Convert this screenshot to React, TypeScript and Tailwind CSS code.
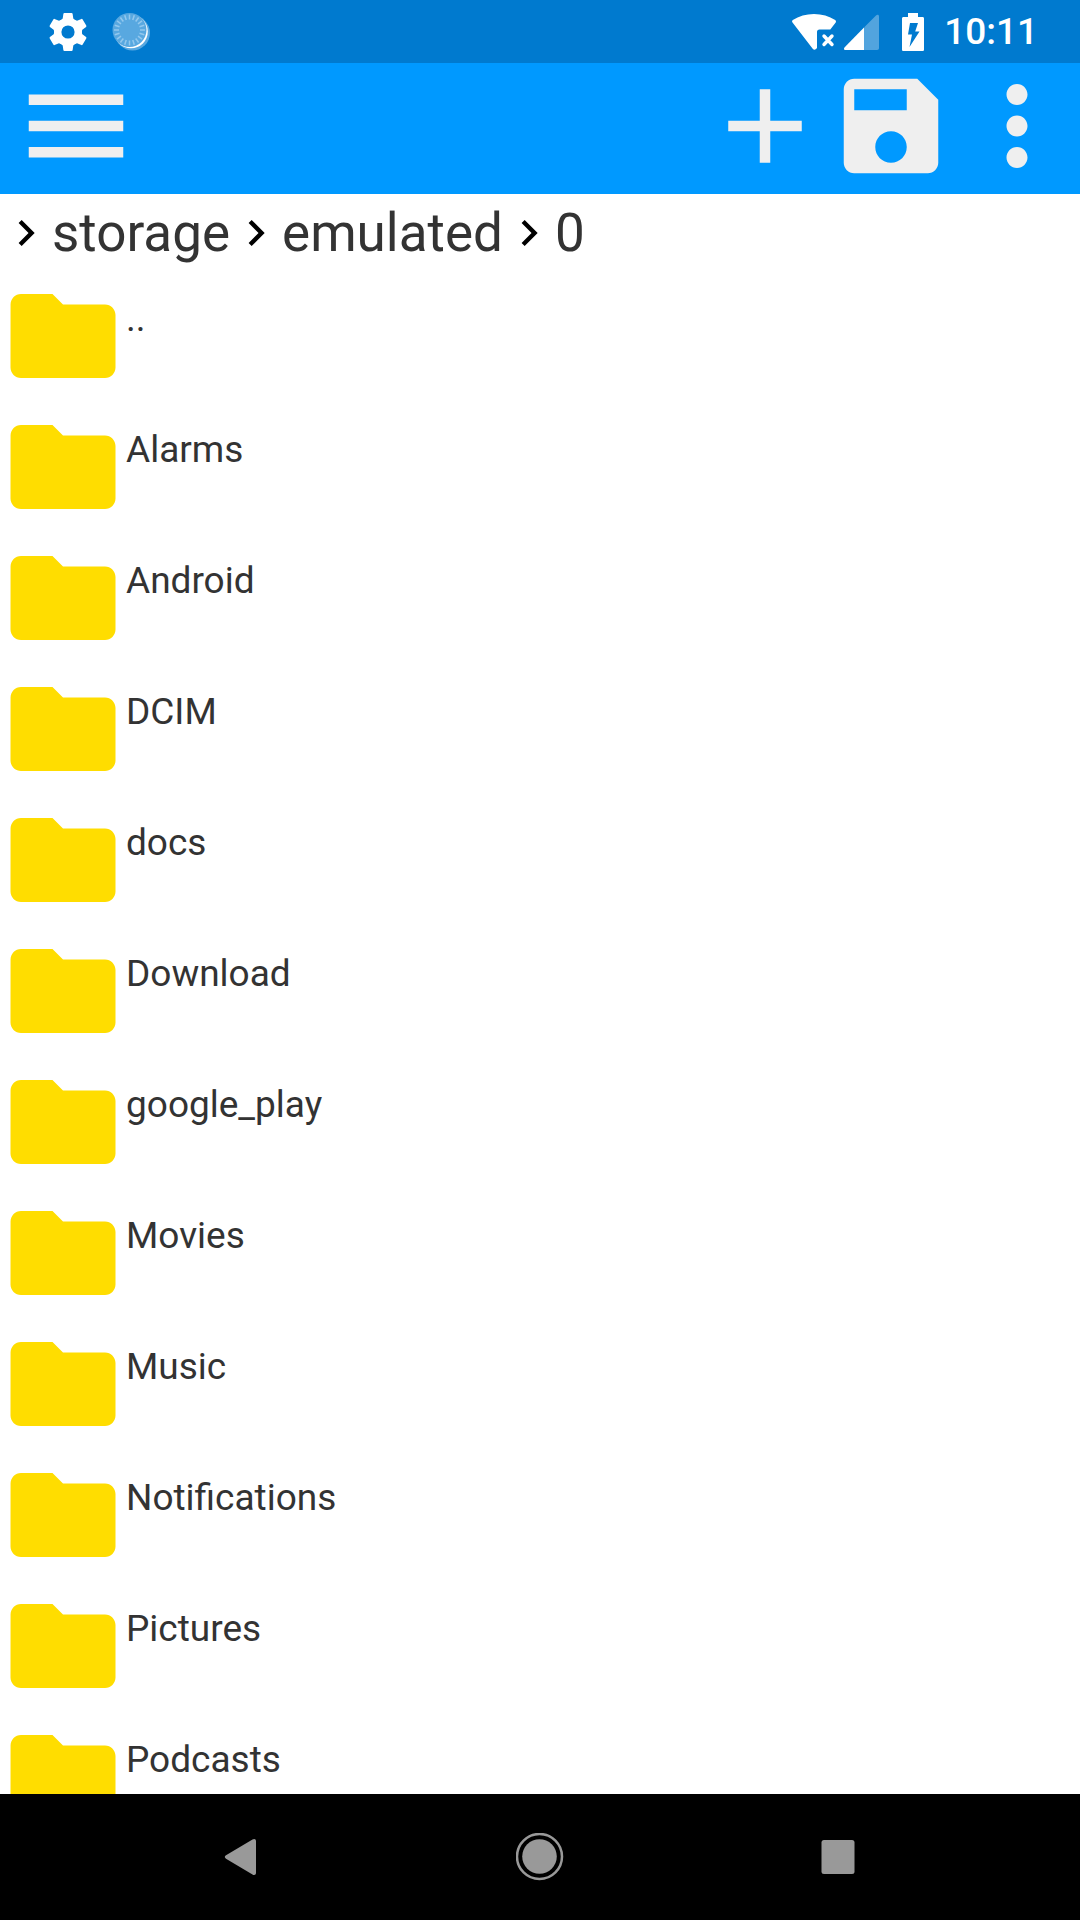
import { Fragment } from 'react';

const PATH = ['storage', 'emulated', '0'];

const FOLDERS = [
  '..',
  'Alarms',
  'Android',
  'DCIM',
  'docs',
  'Download',
  'google_play',
  'Movies',
  'Music',
  'Notifications',
  'Pictures',
  'Podcasts',
];

// 24x24 glyphs
const ICONS = {
  menu: 'M3 18h18v-2H3v2zm0-5h18v-2H3v2zm0-7v2h18V6H3z',
  add: 'M19 13h-6v6h-2v-6H5v-2h6V5h2v6h6v2z',
  save: 'M17 3H5c-1.11 0-2 .9-2 2v14c0 1.1.89 2 2 2h14c1.1 0 2-.9 2-2V7l-4-4zm-5 16c-1.66 0-3-1.34-3-3s1.34-3 3-3 3 1.34 3 3-1.34 3-3 3zm3-10H5V5h10v4z',
  more: 'M12 8c1.1 0 2-.9 2-2s-.9-2-2-2-2 .9-2 2 .9 2 2 2zm0 2c-1.1 0-2 .9-2 2s.9 2 2 2 2-.9 2-2-.9-2-2-2zm0 6c-1.1 0-2 .9-2 2s.9 2 2 2 2-.9 2-2-.9-2-2-2z',
  chevron: 'M10 6L8.59 7.41 13.17 12l-4.58 4.59L10 18l6-6z',
  folder: 'M10 4H4c-1.1 0-1.99.9-1.99 2L2 18c0 1.1.9 2 2 2h16c1.1 0 2-.9 2-2V8c0-1.1-.9-2-2-2h-8l-2-2z',
};

function Icon({ name, className }: { name: keyof typeof ICONS; className: string }) {
  return (
    <svg viewBox="0 0 24 24" fill="currentColor" className={`shrink-0 ${className}`} aria-hidden="true">
      <path d={ICONS[name]} />
    </svg>
  );
}

function SettingsIcon() {
  return (
    <svg viewBox="-23 -23 46 46" className="size-[46px]" fill="currentColor" aria-hidden="true">
      <circle r="10.300" fill="none" stroke="currentColor" strokeWidth="7.400" />
      {[0, 60, 120, 180, 240, 300].map((angle) => (
        <path
          key={angle}
          d="M-7 -11.500L-5.300 -13.500L-4.600 -18.200Q-4.400 -19 -3.600 -19H3.600Q4.400 -19 4.600 -18.200L5.300 -13.500L7 -11.500z"
          transform={`rotate(${angle})`}
        />
      ))}
    </svg>
  );
}

function SyncIcon() {
  return (
    <svg viewBox="0 0 40 40" className="size-10" aria-hidden="true">
      <circle cx="21.500" cy="21" r="17.500" fill="#58a8e0" />
      <circle cx="20" cy="19.500" r="16.800" fill="#fff" />
      <circle cx="18.500" cy="18" r="17" fill="#58a8e0" />
      {Array.from({ length: 20 }, (_, i) => (
        <path
          key={i}
          d="M18.500 2.500v5"
          stroke="#93c8ee"
          strokeWidth="1.500"
          transform={`rotate(${i * 18} 18.500 18)`}
        />
      ))}
    </svg>
  );
}

function StatusBar() {
  return (
    <div className="flex h-[63px] shrink-0 items-center justify-between bg-[#007acf] px-[45px] pr-[42px] text-white">
      <div className="flex items-center gap-5">
        <SettingsIcon />
        <SyncIcon />
      </div>
      <div className="flex items-center">
        <svg viewBox="0 0 44 40" className="mr-2 h-10 w-11" fill="currentColor" aria-hidden="true">
          <path d="M.7 10.8C-.2 9.7-.2 8.800.8 8 7 4 14 2 22 2s15 2 21.200 6c1 .8 1 1.700.3 2.800l-5.200 6.700H27.500c-1.600 0-2.500.9-2.500 2.500V36l-1 1c-1.200 1.100-2.200 1-3.300-.3z" />
          <path d="M32 24l8 8.500M40 24l-8 8.500" stroke="currentColor" strokeWidth="3.400" strokeLinecap="round" />
        </svg>
        <svg viewBox="0 0 36 40" className="mr-[22px] h-10 w-9" fill="currentColor" aria-hidden="true">
          <path d="M20 15.500L32 3.500c1.500-1.300 3-.8 3 1.200v31.300c0 1.300-.7 2-2 2H20z" opacity=".32" />
          <path d="M20 15.500V38H1.500C-.2 38-.5 36.500.7 35.200z" />
        </svg>
        <svg viewBox="0 0 22 40" className="mr-5 h-10 w-[22px]" fill="currentColor" aria-hidden="true">
          <path
            fillRule="evenodd"
            d="M6 1h10v4h4.500c1 0 1.500.6 1.500 1.500v31c0 1-.6 1.500-1.500 1.500h-19C.6 39 0 38.500 0 37.500v-31C0 5.600.6 5 1.500 5H6zM8 11L6 22.500h4L7.500 35l10-15.500H13.200L16 11z"
          />
        </svg>
        <span className="text-[37px] leading-[44px] font-medium">10:11</span>
      </div>
    </div>
  );
}

function Toolbar() {
  return (
    <header className="flex h-[131px] shrink-0 items-start bg-[#0099ff] text-[#efefef]">
      <button type="button" aria-label="Menu" className="ml-[13px]">
        <Icon name="menu" className="size-[126px]" />
      </button>
      <button type="button" aria-label="Add" className="ml-auto">
        <Icon name="add" className="size-[126px]" />
      </button>
      <button type="button" aria-label="Save">
        <Icon name="save" className="size-[126px]" />
      </button>
      <button type="button" aria-label="More options">
        <Icon name="more" className="size-[126px]" />
      </button>
    </header>
  );
}

function Breadcrumbs() {
  return (
    <nav className="flex h-[79px] shrink-0 items-center pb-[2px] text-[53px] leading-[62px]">
      {PATH.map((part) => (
        <Fragment key={part}>
          <Icon name="chevron" className="size-[52px] text-black" />
          <a href="#">{part}</a>
        </Fragment>
      ))}
    </nav>
  );
}

function NavBar() {
  return (
    <div className="flex h-[126px] shrink-0 bg-black px-[92px] text-[#999]">
      <button type="button" aria-label="Back" className="flex flex-1 items-center justify-center">
        <svg viewBox="0 0 48 48" className="size-12" fill="currentColor" aria-hidden="true">
          <path d="M9 22.300L35.500 6.600c1.900-1.100 3.500-.4 3.500 1.700v31.400c0 2.100-1.600 2.800-3.500 1.700L9 25.700c-1.600-1-1.600-2.400 0-3.400z" />
        </svg>
      </button>
      <button type="button" aria-label="Home" className="flex flex-1 items-center justify-center">
        <svg viewBox="0 0 48 48" className="size-12" fill="currentColor" aria-hidden="true">
          <circle cx="23.500" cy="23.500" r="17.300" />
          <circle cx="23.500" cy="23.500" r="22.500" fill="none" stroke="currentColor" strokeWidth="2.500" />
        </svg>
      </button>
      <button type="button" aria-label="Recent apps" className="flex flex-1 items-center justify-center">
        <svg viewBox="0 0 48 48" className="size-12" fill="currentColor" aria-hidden="true">
          <rect x="6.500" y="7" width="33" height="34" rx="2.500" />
        </svg>
      </button>
    </div>
  );
}

export default function App() {
  return (
    <div className="flex h-screen flex-col overflow-hidden bg-white font-[Roboto,sans-serif] text-[#333]">
      <StatusBar />
      <Toolbar />
      <Breadcrumbs />
      <ul className="min-h-0 flex-1 overflow-hidden">
        {FOLDERS.map((name) => (
          <li key={name}>
            <button type="button" className="flex h-[131px] w-full items-start text-left">
              <Icon name="folder" className="size-[126px] text-[#ffdd00]" />
              <span className="pt-6 text-[37px] leading-[44px]">{name}</span>
            </button>
          </li>
        ))}
      </ul>
      <NavBar />
    </div>
  );
}
